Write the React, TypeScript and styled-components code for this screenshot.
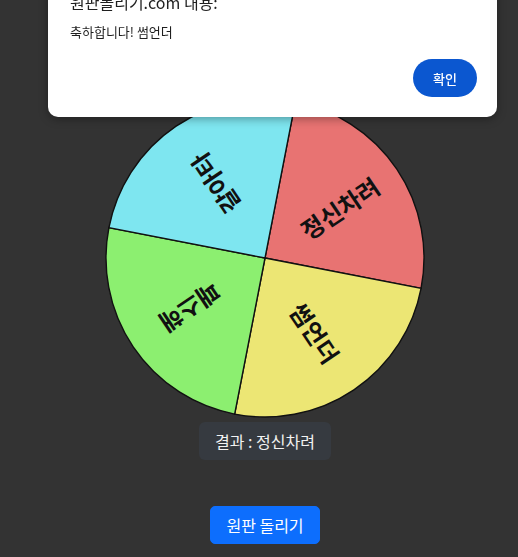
import React from "react";
import styled, { createGlobalStyle } from "styled-components";

const GlobalStyle = createGlobalStyle`
  html, body {
    margin: 0;
    padding: 0;
    background: #333333;
    font-family: "Noto Sans CJK KR", "Noto Sans", sans-serif;
  }
  * { box-sizing: border-box; }
`;

const Page = styled.main`
  min-height: 557px;
  padding: 98px 0 0 12px;
  display: flex;
  flex-direction: column;
  align-items: center;
  background: #333333;
`;

const WheelSvg = styled.svg`
  display: block;
  width: 320px;
  height: 320px;
`;

const Result = styled.div`
  margin-top: 4px;
  padding: 7px 16px;
  border-radius: 6px;
  background: #363a40;
  color: #f2f2f2;
  font-size: 16px;
  line-height: 24px;
`;

const SpinButton = styled.button`
  margin-top: 46px;
  padding: 6px 15px;
  border: 1px solid #0d6efd;
  border-radius: 5px;
  background: #0d6efd;
  color: #ffffff;
  font-family: inherit;
  font-size: 16px;
  line-height: 24px;
  cursor: pointer;
`;

const Dialog = styled.div`
  position: fixed;
  top: -9px;
  left: 48px;
  width: 449px;
  padding: 0 20px 20px 22px;
  background: #ffffff;
  border-radius: 0 0 10px 10px;
  box-shadow: 0 2px 10px rgba(0, 0, 0, 0.35);
  display: flex;
  flex-direction: column;
`;

const DialogTitle = styled.div`
  font-size: 16px;
  line-height: 22px;
  color: #1f1f1f;
`;

const DialogMessage = styled.div`
  margin-top: 10px;
  font-size: 13px;
  line-height: 18px;
  color: #1f1f1f;
`;

const DialogActions = styled.div`
  margin-top: 18px;
  display: flex;
  justify-content: flex-end;
`;

const OkButton = styled.button`
  height: 38px;
  padding: 0 20px;
  border: none;
  border-radius: 19px;
  background: #0b57d0;
  color: #ffffff;
  font-family: inherit;
  font-size: 13px;
  font-weight: 500;
`;

type Segment = { label: string; color: string };

const segments: Segment[] = [
  { label: "정신차려", color: "#e87372" },
  { label: "썸언더", color: "#ece674" },
  { label: "패스해", color: "#8cef70" },
  { label: "갈아타", color: "#7ee6f0" },
];

const C = 160;
const R = 159;
const START = -79;

function pt(angleDeg: number, r: number) {
  const a = (angleDeg * Math.PI) / 180;
  return [C + r * Math.cos(a), C + r * Math.sin(a)];
}

function Wheel() {
  const step = 360 / segments.length;
  return (
    <WheelSvg viewBox="0 0 320 320">
      {segments.map((s, i) => {
        const a0 = START + i * step;
        const a1 = a0 + step;
        const [x0, y0] = pt(a0, R);
        const [x1, y1] = pt(a1, R);
        return (
          <path
            key={s.label}
            d={`M${C},${C} L${x0},${y0} A${R},${R} 0 0 1 ${x1},${y1} Z`}
            fill={s.color}
            stroke="#111"
            strokeWidth={1.4}
          />
        );
      })}
      {segments.map((s, i) => {
        const mid = START + i * step + step / 2;
        return (
          <text
            key={"t" + s.label}
            x={C + 90}
            y={C}
            transform={`rotate(${mid} ${C} ${C})`}
            textAnchor="middle"
            dominantBaseline="central"
            fontFamily='"Noto Sans CJK KR", sans-serif'
            fontSize={24}
            fontWeight={700}
            fill="#111"
          >
            {s.label}
          </text>
        );
      })}
    </WheelSvg>
  );
}

export default function App() {
  return (
    <>
      <GlobalStyle />
      <Page>
        <Wheel />
        <Result>결과 : 정신차려</Result>
        <SpinButton>원판 돌리기</SpinButton>
      </Page>
      <Dialog>
        <DialogTitle>원판돌리기.com 내용:</DialogTitle>
        <DialogMessage>축하합니다! 썸언더</DialogMessage>
        <DialogActions>
          <OkButton>확인</OkButton>
        </DialogActions>
      </Dialog>
    </>
  );
}
